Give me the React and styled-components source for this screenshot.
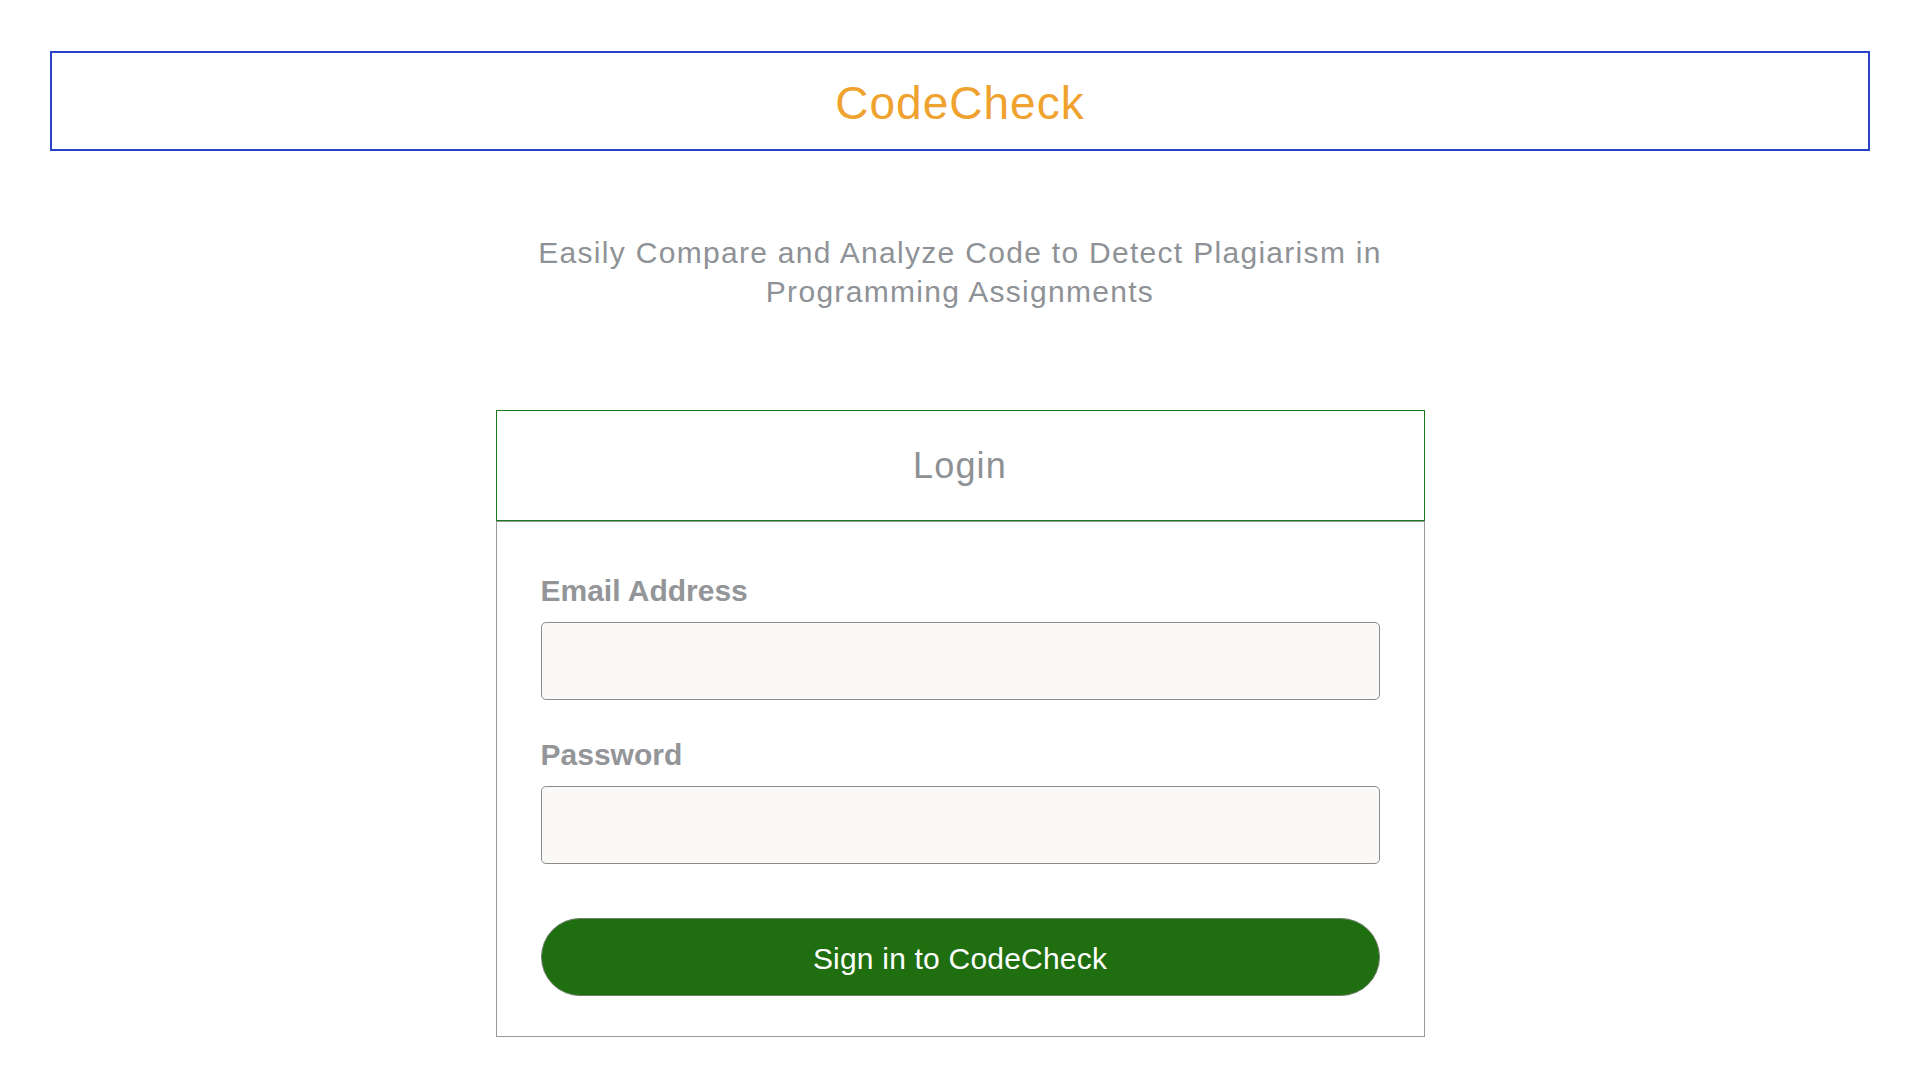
import React from "react";
import styled, { createGlobalStyle } from "styled-components";

const GlobalStyle = createGlobalStyle`
  html, body {
    margin: 0;
    padding: 0;
    background: #ffffff;
  }
  body {
    font-family: "Liberation Sans", Arial, Helvetica, sans-serif;
  }
`;

const Page = styled.div`
  display: flex;
  flex-direction: column;
  padding: 51px 50px 40px;
`;

const Header = styled.header`
  height: 100px;
  box-sizing: border-box;
  border: 2px solid #2742c8;
  padding-top: 4px;
  display: flex;
  align-items: center;
  justify-content: center;
`;

const Title = styled.h1`
  margin: 0;
  font-size: 46px;
  font-weight: 400;
  letter-spacing: 1px;
  color: #f0a22e;
`;

const Tagline = styled.p`
  margin: 82px 0 0;
  text-align: center;
  font-size: 30px;
  line-height: 39px;
  letter-spacing: 1.3px;
  color: #8e9296;
`;

const Card = styled.section`
  width: 929px;
  margin: 99px auto 0;
  display: flex;
  flex-direction: column;
`;

const CardHeader = styled.div`
  height: 111px;
  box-sizing: border-box;
  border: 1px solid #1b7a1b;
  display: flex;
  align-items: center;
  justify-content: center;
`;

const CardTitle = styled.h2`
  margin: 0;
  font-size: 36px;
  font-weight: 400;
  letter-spacing: 1.2px;
  color: #8e9194;
`;

const CardBody = styled.form`
  border: 1px solid #9a9a9a;
  padding: 52px 44px 40px;
  display: flex;
  flex-direction: column;
`;

const Label = styled.label`
  display: block;
  font-size: 30px;
  line-height: 34px;
  font-weight: 700;
  color: #939598;
  margin-bottom: 14px;
`;

const Input = styled.input`
  display: block;
  width: 100%;
  height: 78px;
  box-sizing: border-box;
  border: 1px solid #8c8c8c;
  border-radius: 5px;
  background: #faf9f8;
  margin: 0 0 ${(p) => p.$gap}px;
  padding: 0 16px;
  font-size: 26px;
  font-family: inherit;
  outline: none;
`;

const SubmitButton = styled.button`
  width: 100%;
  height: 78px;
  box-sizing: border-box;
  border: 1px solid #6f7f6a;
  border-radius: 39px;
  background: #1f6e10;
  color: #ffffff;
  font-family: inherit;
  font-size: 30px;
  letter-spacing: 0.2px;
  padding: 4px 0 0;
  cursor: pointer;
`;

export default function App() {
  return (
    <>
      <GlobalStyle />
      <Page>
        <Header>
          <Title>CodeCheck</Title>
        </Header>
        <Tagline>
          Easily Compare and Analyze Code to Detect Plagiarism in
          <br />
          Programming Assignments
        </Tagline>
        <Card>
          <CardHeader>
            <CardTitle>Login</CardTitle>
          </CardHeader>
          <CardBody onSubmit={(e) => e.preventDefault()}>
            <Label htmlFor="email">Email Address</Label>
            <Input id="email" type="email" $gap={38} />
            <Label htmlFor="password">Password</Label>
            <Input id="password" type="password" $gap={54} />
            <SubmitButton type="submit">Sign in to CodeCheck</SubmitButton>
          </CardBody>
        </Card>
      </Page>
    </>
  );
}
